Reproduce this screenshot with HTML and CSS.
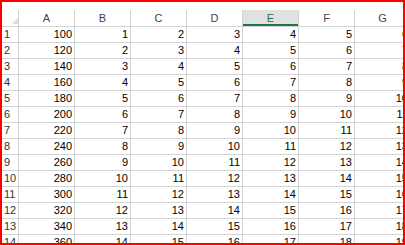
FILE: index.html
```html
<!DOCTYPE html>
<html lang="en">
<head>
    <meta charset="UTF-8">
    <title>Sheet1</title>
    <link rel="stylesheet" href="styles.css">
    <script>
        document.addEventListener('DOMContentLoaded', () => {
            const sheet = document.getElementById('sheet');
            const letters = ['A', 'B', 'C', 'D', 'E', 'F', 'G'];

            let html = '<div class="corner"><span class="corner-mark"></span></div>';
            letters.forEach(letter => {
                const active = letter === 'E' ? ' col-head-active' : '';
                html += `<div class="col-head${active}">${letter}</div>`;
            });

            for (let row = 1; row <= 15; row++) {
                html += `<div class="row-head">${row}</div>`;
                html += `<div class="cell">${80 + row * 20}</div>`;
                for (let col = 0; col < 6; col++) {
                    html += `<div class="cell">${row + col}</div>`;
                }
            }
            sheet.innerHTML = html;
        });
    </script>
</head>
<body>
    <div class="frame">
        <div class="sheet" id="sheet"></div>
    </div>
</body>
</html>
```

FILE: styles.css
```css
body {
    margin: 0;
    padding: 0;
    background-color: #fff;
    font-family: 'Liberation Sans', Arial, sans-serif;
}
.frame {
    width: 405px;
    height: 245px;
    box-sizing: border-box;
    border: 2px solid #ff0000;
    padding-top: 8px;
    overflow: hidden;
    background-color: #fff;
}
.sheet {
    display: grid;
    grid-template-columns: 16px repeat(7, 55px);
    grid-template-rows: 16px;
    grid-auto-rows: 15px;
    gap: 1px;
    background-color: #d4d4d4;
    width: max-content;
    font-size: 11px;
}
.corner,
.col-head,
.row-head,
.cell {
    background-color: #fff;
    line-height: 15px;
    white-space: nowrap;
}
.corner {
    position: relative;
}
.corner-mark {
    position: absolute;
    right: 0;
    bottom: 2px;
    width: 0;
    height: 0;
    border-left: 6px solid transparent;
    border-bottom: 6px solid #dcdcdc;
}
.col-head {
    text-align: center;
    color: #444;
    line-height: 16px;
}
.col-head-active {
    background-color: #e1e1e1;
    color: #217346;
    box-shadow: inset 0 -2px 0 #217346;
}
.row-head {
    color: #333;
    padding-left: 2px;
}
.cell {
    text-align: right;
    padding-right: 2px;
    color: #000;
}
```
